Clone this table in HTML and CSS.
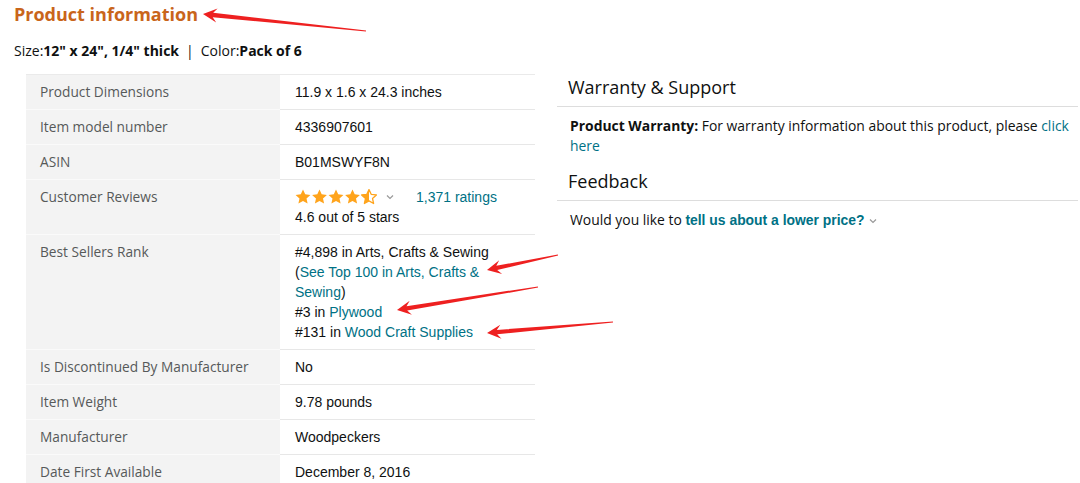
FILE: index.html
```html
<!DOCTYPE html>
<html>
<head>
<meta charset="utf-8">
<link rel="stylesheet" href="styles.css">
</head>
<body>
<div class="page">
  <h2 class="title">Product information</h2>
  <div class="variant">Size:<b>12" x 24", 1/4" thick</b><span class="sep">|</span>Color:<b>Pack of 6</b></div>
  <div class="cols">
    <table class="details">
      <tr><th>Product Dimensions</th><td>11.9 x 1.6 x 24.3 inches</td></tr>
      <tr><th>Item model number</th><td>4336907601</td></tr>
      <tr><th>ASIN</th><td>B01MSWYF8N</td></tr>
      <tr><th>Customer Reviews</th><td>
        <div class="rating">
          <svg class="stars" width="82" height="16" viewBox="0 0 82 16">
            <defs>
              <path id="st" d="M8 0.6l2.2 4.7 5.2.6-3.9 3.5 1.1 5.1L8 11.9l-4.6 2.6 1.1-5.1L.6 5.9l5.2-.6z"/>
              <clipPath id="half"><rect x="0" y="0" width="8" height="16"/></clipPath>
            </defs>
            <use href="#st" x="0" fill="#ffa41c"/>
            <use href="#st" x="16.5" fill="#ffa41c"/>
            <use href="#st" x="33" fill="#ffa41c"/>
            <use href="#st" x="49.5" fill="#ffa41c"/>
            <g transform="translate(66,0)">
              <path d="M8 0.6l2.2 4.7 5.2.6-3.9 3.5 1.1 5.1L8 11.9l-4.6 2.6 1.1-5.1L.6 5.9l5.2-.6z" fill="#fff" stroke="#ffa41c" stroke-width="1.3" stroke-linejoin="round"/>
              <path d="M8 0.6l2.2 4.7 5.2.6-3.9 3.5 1.1 5.1L8 11.9l-4.6 2.6 1.1-5.1L.6 5.9l5.2-.6z" fill="#ffa41c" clip-path="url(#half)"/>
            </g>
          </svg>
          <svg class="chev" width="10" height="8" viewBox="0 0 10 8"><path d="M2 2.5l3 3 3-3" fill="none" stroke="#999" stroke-width="1.2"/></svg>
          <a class="link ratings">1,371 ratings</a>
        </div>
        <div>4.6 out of 5 stars</div>
      </td></tr>
      <tr><th>Best Sellers Rank</th><td>
        #4,898 in Arts, Crafts &amp; Sewing<br>
        (<a class="link">See Top 100 in Arts, Crafts &amp; Sewing</a>)<br>
        #3 in <a class="link">Plywood</a><br>
        #131 in <a class="link">Wood Craft Supplies</a>
      </td></tr>
      <tr><th>Is Discontinued By Manufacturer</th><td>No</td></tr>
      <tr><th>Item Weight</th><td>9.78 pounds</td></tr>
      <tr><th>Manufacturer</th><td>Woodpeckers</td></tr>
      <tr><th>Date First Available</th><td>December 8, 2016</td></tr>
    </table>
    <div class="side">
      <h3 class="side-head">Warranty &amp; Support</h3>
      <p class="side-text"><b>Product Warranty:</b> For warranty information about this product, please <a class="link">click here</a></p>
      <h3 class="side-head">Feedback</h3>
      <p class="side-text">Would you like to <a class="link strong">tell us about a lower price?</a> <svg class="chev" width="10" height="8" viewBox="0 0 10 8"><path d="M2 2.5l3 3 3-3" fill="none" stroke="#999" stroke-width="1.2"/></svg></p>
    </div>
  </div>
  <svg class="arrows" width="1080" height="483" viewBox="0 0 1080 483">
    <polygon points="203,14 217.6,8.5 213.2,12.85 366.1,30.4 365.9,31.6 212.7,17.2 216.2,22.4"/>
    <polygon points="487,270 499.2,260.3 496.3,265.8 557.9,254.4 558.1,255.6 497.2,270.1 502.1,274.0"/>
    <polygon points="397,310 409.7,300.85 406.5,306.2 537.9,286.4 538.1,287.6 407.2,310.6 411.9,314.65"/>
    <polygon points="487,333 500.3,324.8 496.8,329.9 612.95,321.4 613.05,322.6 497.2,334.3 501.5,338.8"/>
  </svg>
</div>
</body>
</html>
```

FILE: styles.css
```css
html, body {
  margin: 0;
  padding: 0;
  background: #fff;
}
.page {
  position: relative;
  width: 1080px;
  height: 483px;
  overflow: hidden;
  padding-left: 14px;
  box-sizing: border-box;
  font-family: "Open Sans", "Noto Sans", sans-serif;
  color: #0f1111;
}
.title {
  margin: 0;
  padding-top: 2px;
  font-size: 18px;
  line-height: 24px;
  font-weight: 700;
  color: #c9651b;
}
.variant {
  margin-top: 15px;
  font-size: 14px;
  line-height: 20px;
  color: #0f1111;
}
.variant b {
  font-weight: 700;
}
.sep {
  margin: 0 7px;
  color: #0f1111;
}
.cols {
  display: flex;
  gap: 22px;
  margin-top: 13px;
  margin-left: 12px;
  align-items: flex-start;
}
.details {
  border-collapse: collapse;
  width: 509px;
  border-top: 1px solid #eaeaea;
}
.details th,
.details td {
  border-bottom: 1px solid #e7e7e7;
  padding: 7px 14px 7px 14px;
  line-height: 20px;
  vertical-align: top;
  text-align: left;
}
.details th {
  width: 226px;
  background: #f3f3f3;
  font-weight: 400;
  font-size: 13.7px;
  color: #565959;
  border-bottom-color: #fafafa;
}
.details td {
  padding-left: 15px;
  font-family: "Liberation Sans", Arial, sans-serif;
  font-size: 14px;
  color: #0f1111;
}
.link {
  color: #007185;
  text-decoration: none;
}
.rating {
  display: flex;
  align-items: center;
  height: 20px;
}
.stars {
  display: block;
  margin-top: -1px;
}
.chev {
  margin-left: 8px;
}
.ratings {
  margin-left: 21px;
}
.side {
  width: 521px;
}
.side-head {
  margin: 0;
  padding: 0 0 6px 11px;
  font-size: 18px;
  line-height: 26px;
  font-weight: 400;
  color: #0f1111;
  border-bottom: 1px solid #dddddd;
}
.side-text {
  margin: 9px 0 12px 0;
  padding-left: 13px;
  font-size: 13.9px;
  line-height: 20px;
  color: #0f1111;
}
.side-text b {
  font-weight: 700;
}
.strong {
  font-family: "Liberation Sans", Arial, sans-serif;
  font-weight: 700;
}
.side-text .chev {
  margin-left: 0;
}
.arrows {
  position: absolute;
  left: 0;
  top: 0;
  pointer-events: none;
}
.arrows polygon {
  fill: #ee2020;
}
```
